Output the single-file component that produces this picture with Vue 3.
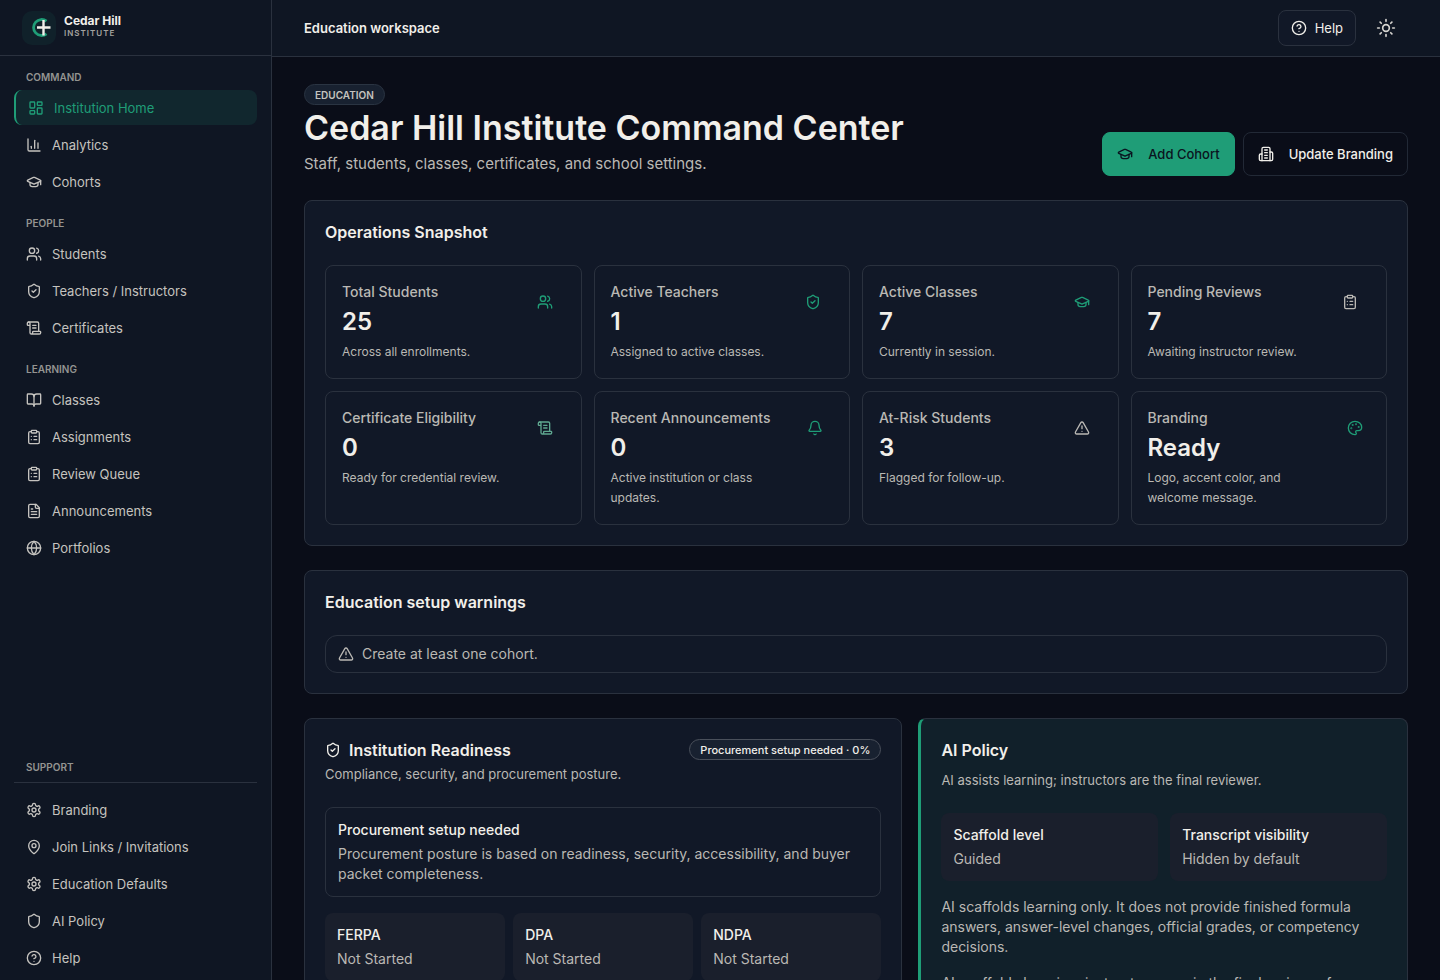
<script setup>
import { h } from 'vue'

const icons = {
  dashboard: '<rect width="7" height="9" x="3" y="3" rx="1"/><rect width="7" height="5" x="14" y="3" rx="1"/><rect width="7" height="9" x="14" y="12" rx="1"/><rect width="7" height="5" x="3" y="16" rx="1"/>',
  chart: '<path d="M3 3v16a2 2 0 0 0 2 2h16"/><path d="M18 17V9"/><path d="M13 17V5"/><path d="M8 17v-3"/>',
  cap: '<path d="M21.42 10.922a1 1 0 0 0-.019-1.838L12.83 5.18a2 2 0 0 0-1.66 0L2.6 9.08a1 1 0 0 0 0 1.832l8.57 3.908a2 2 0 0 0 1.66 0z"/><path d="M22 10v6"/><path d="M6 12.5V16a6 3 0 0 0 12 0v-3.5"/>',
  users: '<path d="M16 21v-2a4 4 0 0 0-4-4H6a4 4 0 0 0-4 4v2"/><circle cx="9" cy="7" r="4"/><path d="M22 21v-2a4 4 0 0 0-3-3.87"/><path d="M16 3.13a4 4 0 0 1 0 7.75"/>',
  shieldCheck: '<path d="M20 13c0 5-3.5 7.5-7.66 8.95a1 1 0 0 1-.67-.01C7.5 20.5 4 18 4 13V6a1 1 0 0 1 1-1c2 0 4.5-1.2 6.24-2.72a1.17 1.17 0 0 1 1.52 0C14.51 3.81 17 5 19 5a1 1 0 0 1 1 1z"/><path d="m9 12 2 2 4-4"/>',
  shield: '<path d="M20 13c0 5-3.5 7.5-7.66 8.95a1 1 0 0 1-.67-.01C7.5 20.5 4 18 4 13V6a1 1 0 0 1 1-1c2 0 4.5-1.2 6.24-2.72a1.17 1.17 0 0 1 1.52 0C14.51 3.81 17 5 19 5a1 1 0 0 1 1 1z"/>',
  scroll: '<path d="M15 12h-5"/><path d="M15 8h-5"/><path d="M19 17V5a2 2 0 0 0-2-2H4"/><path d="M8 21h12a2 2 0 0 0 2-2v-1a1 1 0 0 0-1-1H11a1 1 0 0 0-1 1v1a2 2 0 1 1-4 0V5a2 2 0 1 0-4 0v2a1 1 0 0 0 1 1h3"/>',
  book: '<path d="M12 7v14"/><path d="M3 18a1 1 0 0 1-1-1V4a1 1 0 0 1 1-1h5a4 4 0 0 1 4 4 4 4 0 0 1 4-4h5a1 1 0 0 1 1 1v13a1 1 0 0 1-1 1h-6a3 3 0 0 0-3 3 3 3 0 0 0-3-3z"/>',
  clipboard: '<rect width="8" height="4" x="8" y="2" rx="1" ry="1"/><path d="M16 4h2a2 2 0 0 1 2 2v14a2 2 0 0 1-2 2H6a2 2 0 0 1-2-2V6a2 2 0 0 1 2-2h2"/><path d="M12 11h4"/><path d="M12 16h4"/><path d="M8 11h.01"/><path d="M8 16h.01"/>',
  file: '<path d="M15 2H6a2 2 0 0 0-2 2v16a2 2 0 0 0 2 2h12a2 2 0 0 0 2-2V7Z"/><path d="M14 2v4a2 2 0 0 0 2 2h4"/><path d="M10 9H8"/><path d="M16 13H8"/><path d="M16 17H8"/>',
  globe: '<circle cx="12" cy="12" r="10"/><path d="M12 2a14.5 14.5 0 0 0 0 20 14.5 14.5 0 0 0 0-20"/><path d="M2 12h20"/>',
  settings: '<path d="M12.22 2h-.44a2 2 0 0 0-2 2v.18a2 2 0 0 1-1 1.73l-.43.25a2 2 0 0 1-2 0l-.15-.08a2 2 0 0 0-2.73.73l-.22.38a2 2 0 0 0 .73 2.73l.15.1a2 2 0 0 1 1 1.72v.51a2 2 0 0 1-1 1.74l-.15.09a2 2 0 0 0-.73 2.73l.22.38a2 2 0 0 0 2.73.73l.15-.08a2 2 0 0 1 2 0l.43.25a2 2 0 0 1 1 1.73V20a2 2 0 0 0 2 2h.44a2 2 0 0 0 2-2v-.18a2 2 0 0 1 1-1.73l.43-.25a2 2 0 0 1 2 0l.15.08a2 2 0 0 0 2.73-.73l.22-.39a2 2 0 0 0-.73-2.73l-.15-.08a2 2 0 0 1-1-1.74v-.5a2 2 0 0 1 1-1.74l.15-.09a2 2 0 0 0 .73-2.73l-.22-.38a2 2 0 0 0-2.73-.73l-.15.08a2 2 0 0 1-2 0l-.43-.25a2 2 0 0 1-1-1.73V4a2 2 0 0 0-2-2z"/><circle cx="12" cy="12" r="3"/>',
  pin: '<path d="M20 10c0 4.993-5.539 10.193-7.399 11.799a1 1 0 0 1-1.202 0C9.539 20.193 4 14.993 4 10a8 8 0 0 1 16 0"/><circle cx="12" cy="10" r="3"/>',
  help: '<circle cx="12" cy="12" r="10"/><path d="M9.09 9a3 3 0 0 1 5.83 1c0 2-3 3-3 3"/><path d="M12 17h.01"/>',
  sun: '<circle cx="12" cy="12" r="4"/><path d="M12 2v2"/><path d="M12 20v2"/><path d="m4.93 4.93 1.41 1.41"/><path d="m17.66 17.66 1.41 1.41"/><path d="M2 12h2"/><path d="M20 12h2"/><path d="m6.34 17.66-1.41 1.41"/><path d="m19.07 4.93-1.41 1.41"/>',
  building: '<path d="M6 22V4a2 2 0 0 1 2-2h8a2 2 0 0 1 2 2v18Z"/><path d="M6 12H4a2 2 0 0 0-2 2v6a2 2 0 0 0 2 2h2"/><path d="M18 9h2a2 2 0 0 1 2 2v9a2 2 0 0 1-2 2h-2"/><path d="M10 6h4"/><path d="M10 10h4"/><path d="M10 14h4"/><path d="M10 18h4"/>',
  bell: '<path d="M10.268 21a2 2 0 0 0 3.464 0"/><path d="M3.262 15.326A1 1 0 0 0 4 17h16a1 1 0 0 0 .74-1.673C19.41 13.956 18 12.499 18 8A6 6 0 0 0 6 8c0 4.499-1.411 5.956-2.738 7.326"/>',
  alert: '<path d="m21.73 18-8-14a2 2 0 0 0-3.48 0l-8 14A2 2 0 0 0 4 21h16a2 2 0 0 0 1.73-3"/><path d="M12 9v4"/><path d="M12 17h.01"/>',
  palette: '<path d="M12 22a1 1 0 0 1 0-20 10 9 0 0 1 10 9 5 5 0 0 1-5 5h-2.25a1.75 1.75 0 0 0-1.4 2.8l.3.4a1.75 1.75 0 0 1-1.4 2.8z"/><circle cx="13.5" cy="6.5" r=".5"/><circle cx="17.5" cy="10.5" r=".5"/><circle cx="6.5" cy="12.5" r=".5"/><circle cx="8.5" cy="7.5" r=".5"/>',
}

const Icon = (props) =>
  h('svg', {
    width: props.size || 16,
    height: props.size || 16,
    viewBox: '0 0 24 24',
    fill: 'none',
    stroke: 'currentColor',
    'stroke-width': 2,
    'stroke-linecap': 'round',
    'stroke-linejoin': 'round',
    'aria-hidden': 'true',
    innerHTML: icons[props.name],
  })
Icon.props = ['name', 'size']

const groups = [
  {
    title: 'Command',
    items: [
      { label: 'Institution Home', icon: 'dashboard', active: true },
      { label: 'Analytics', icon: 'chart' },
      { label: 'Cohorts', icon: 'cap' },
    ],
  },
  {
    title: 'People',
    items: [
      { label: 'Students', icon: 'users' },
      { label: 'Teachers / Instructors', icon: 'shieldCheck' },
      { label: 'Certificates', icon: 'scroll' },
    ],
  },
  {
    title: 'Learning',
    items: [
      { label: 'Classes', icon: 'book' },
      { label: 'Assignments', icon: 'clipboard' },
      { label: 'Review Queue', icon: 'clipboard' },
      { label: 'Announcements', icon: 'file' },
      { label: 'Portfolios', icon: 'globe' },
    ],
  },
]

const support = [
  { label: 'Branding', icon: 'settings' },
  { label: 'Join Links / Invitations', icon: 'pin' },
  { label: 'Education Defaults', icon: 'settings' },
  { label: 'AI Policy', icon: 'shield' },
  { label: 'Help', icon: 'help' },
]

const stats = [
  { label: 'Total Students', value: '25', note: 'Across all enrollments.', icon: 'users', tone: 'green' },
  { label: 'Active Teachers', value: '1', note: 'Assigned to active classes.', icon: 'shieldCheck', tone: 'green' },
  { label: 'Active Classes', value: '7', note: 'Currently in session.', icon: 'cap', tone: 'green' },
  { label: 'Pending Reviews', value: '7', note: 'Awaiting instructor review.', icon: 'clipboard', tone: 'plain' },
  { label: 'Certificate Eligibility', value: '0', note: 'Ready for credential review.', icon: 'scroll', tone: 'sage' },
  { label: 'Recent Announcements', value: '0', note: 'Active institution or class updates.', icon: 'bell', tone: 'green' },
  { label: 'At-Risk Students', value: '3', note: 'Flagged for follow-up.', icon: 'alert', tone: 'plain' },
  { label: 'Branding', value: 'Ready', note: 'Logo, accent color, and welcome message.', icon: 'palette', tone: 'green' },
]

const agreements = ['FERPA', 'DPA', 'NDPA']
</script>

<template>
  <div class="shell">
    <aside class="sidebar">
      <div class="brand">
        <span class="brand-mark">
          <svg width="34" height="34" viewBox="0 0 34 34" fill="none" aria-hidden="true">
            <path d="M24.5 10.2A8 8 0 1 0 24.5 22.800" stroke="#1f9d77" stroke-width="2.800" />
            <path d="M21.500 9v15.500M15 16.500h13.500" stroke="#f1efea" stroke-width="2.400" />
          </svg>
        </span>
        <span class="brand-text">
          <strong>Cedar Hill</strong>
          <small>INSTITUTE</small>
        </span>
      </div>

      <nav class="nav" aria-label="Main">
        <section v-for="group in groups" :key="group.title">
          <h2 class="nav-title">{{ group.title }}</h2>
          <ul class="nav-list">
            <li v-for="item in group.items" :key="item.label">
              <a href="#" class="nav-link" :class="{ active: item.active }">
                <Icon :name="item.icon" />{{ item.label }}
              </a>
            </li>
          </ul>
        </section>
        <section class="support">
          <h2 class="nav-title">Support</h2>
          <ul class="nav-list">
            <li v-for="item in support" :key="item.label">
              <a href="#" class="nav-link"><Icon :name="item.icon" />{{ item.label }}</a>
            </li>
          </ul>
        </section>
      </nav>
    </aside>

    <div class="content">
      <header class="topbar">
        <span class="workspace">Education workspace</span>
        <div class="tools">
          <button type="button" class="help"><Icon name="help" />Help</button>
          <button type="button" class="theme" aria-label="Toggle theme"><Icon name="sun" :size="20" /></button>
        </div>
      </header>

      <main class="main">
        <div class="hero">
          <div>
            <span class="badge">EDUCATION</span>
            <h1>Cedar Hill Institute Command Center</h1>
            <p>Staff, students, classes, certificates, and school settings.</p>
          </div>
          <div class="actions">
            <button type="button" class="action primary"><Icon name="cap" />Add Cohort</button>
            <button type="button" class="action"><Icon name="building" />Update Branding</button>
          </div>
        </div>

        <section class="panel">
          <h2 class="panel-title">Operations Snapshot</h2>
          <div class="stats">
            <article v-for="stat in stats" :key="stat.label" class="stat">
              <div class="stat-text">
                <h3>{{ stat.label }}</h3>
                <strong>{{ stat.value }}</strong>
                <p>{{ stat.note }}</p>
              </div>
              <span class="stat-icon" :class="stat.tone"><Icon :name="stat.icon" /></span>
            </article>
          </div>
        </section>

        <section class="panel">
          <h2 class="panel-title">Education setup warnings</h2>
          <p class="warning"><Icon name="alert" />Create at least one cohort.</p>
        </section>

        <div class="columns">
          <section class="panel">
            <div class="readiness-head">
              <div>
                <h2 class="title"><Icon name="shieldCheck" />Institution Readiness</h2>
                <p class="sub">Compliance, security, and procurement posture.</p>
              </div>
              <span class="badge status">Procurement setup needed · 0%</span>
            </div>
            <div class="notice">
              <h3>Procurement setup needed</h3>
              <p>Procurement posture is based on readiness, security, accessibility, and buyer packet completeness.</p>
            </div>
            <div class="tiles three">
              <div v-for="name in agreements" :key="name" class="tile">
                <h3>{{ name }}</h3>
                <p>Not Started</p>
              </div>
            </div>
          </section>

          <section class="panel policy">
            <h2 class="title">AI Policy</h2>
            <p class="sub">AI assists learning; instructors are the final reviewer.</p>
            <div class="tiles two">
              <div class="tile">
                <h3>Scaffold level</h3>
                <p>Guided</p>
              </div>
              <div class="tile">
                <h3>Transcript visibility</h3>
                <p>Hidden by default</p>
              </div>
            </div>
            <p class="copy">
              AI scaffolds learning only. It does not provide finished formula answers, answer-level changes,
              official grades, or competency decisions.
            </p>
            <p class="copy">AI scaffolds learning; instructors remain the final reviewer for competency decisions.</p>
          </section>
        </div>
      </main>
    </div>
  </div>
</template>

<style>
body {
  background: #0a0d18;
}
</style>

<style scoped>
.shell {
  display: flex;
  height: 100vh;
  overflow: hidden;
  background: #0a0d18;
  color: #f1efea;
  font-family: Inter, "Liberation Sans", sans-serif;
  font-size: 14px;
  line-height: 20px;
}
.shell * {
  box-sizing: border-box;
}
h1, h2, h3, p, ul {
  margin: 0;
  padding: 0;
  font-weight: inherit;
  font-size: inherit;
}
button {
  font: inherit;
  color: inherit;
  background: none;
  border: 0;
  cursor: pointer;
}
svg {
  flex: none;
}

.sidebar {
  flex: none;
  display: flex;
  flex-direction: column;
  width: 272px;
  background: #0f1623;
  border-right: 1px solid #2a313e;
}
.brand {
  display: flex;
  align-items: center;
  gap: 8px;
  height: 56px;
  padding: 0 22px;
  border-bottom: 1px solid #2a313e;
}
.brand-mark {
  display: flex;
  border-radius: 10px;
  background: #10212a;
}
.brand-text {
  display: flex;
  flex-direction: column;
  padding-bottom: 3px;
}
.brand-text strong {
  font-size: 12px;
  line-height: 14px;
  font-weight: 700;
}
.brand-text small {
  font-size: 8px;
  line-height: 10px;
  font-weight: 600;
  letter-spacing: 1px;
  color: #a3a29f;
}
.nav {
  flex: 1;
  display: flex;
  flex-direction: column;
  gap: 16px;
  padding: 13px 14px 5px;
}
.nav-title {
  padding: 0 12px;
  margin-bottom: 5px;
  font-size: 10px;
  line-height: 16px;
  font-weight: 600;
  text-transform: uppercase;
  color: #949491;
}
.nav-list {
  display: flex;
  flex-direction: column;
  gap: 2px;
  list-style: none;
}
.nav-link {
  display: flex;
  align-items: center;
  gap: 10px;
  height: 35px;
  padding: 0 12px;
  border-radius: 8px;
  font-size: 13px;
  color: #c5c3bf;
  text-decoration: none;
}
.nav-link.active {
  border-left: 2px solid #1f9d77;
  background: #11272e;
  color: #1f9d77;
}
.support {
  margin-top: auto;
}
.support .nav-title {
  margin-bottom: 9px;
  padding-bottom: 7px;
  border-bottom: 1px solid #2a313e;
}

.content {
  flex: 1;
  min-width: 0;
  display: flex;
  flex-direction: column;
}
.topbar {
  flex: none;
  display: flex;
  align-items: center;
  justify-content: space-between;
  height: 57px;
  padding: 0 32px;
  background: #0f1623;
  border-bottom: 1px solid #2a313e;
}
.workspace {
  font-size: 13px;
  font-weight: 600;
}
.tools {
  display: flex;
  align-items: center;
  gap: 8px;
}
.help {
  display: flex;
  align-items: center;
  gap: 8px;
  height: 36px;
  padding: 0 12px;
  border: 1px solid #2a313e;
  border-radius: 8px;
  background: #111827;
  font-size: 13px;
}
.theme {
  display: grid;
  place-items: center;
  width: 44px;
  height: 44px;
  padding: 0;
  color: #d6d4d0;
}
.main {
  flex: 1;
  min-height: 0;
  overflow-y: auto;
  scrollbar-width: none;
  display: flex;
  flex-direction: column;
  gap: 24px;
  padding: 27px 32px 32px;
}
.main > * {
  flex: none;
}
.hero {
  display: flex;
  align-items: flex-end;
  justify-content: space-between;
  gap: 16px;
}
.badge {
  display: inline-flex;
  align-items: center;
  height: 21px;
  padding: 0 10px;
  border: 1px solid #2a3442;
  border-radius: 11px;
  background: #182130;
  font-size: 10px;
  font-weight: 600;
  line-height: 16px;
  color: #c5c3bf;
  white-space: nowrap;
  vertical-align: top;
}
.hero h1 {
  font-size: 34px;
  line-height: 46px;
  font-weight: 600;
}
.hero p {
  font-size: 15px;
  line-height: 25px;
  color: #bab8b4;
}
.actions {
  display: flex;
  gap: 8px;
}
.action {
  display: flex;
  align-items: center;
  gap: 15px;
  height: 44px;
  padding: 0 14px;
  border: 1px solid #222936;
  border-radius: 8px;
  font-size: 13px;
  font-weight: 500;
  white-space: nowrap;
}
.action.primary {
  border-color: #1f9d77;
  background: #1f9d77;
  color: #0a1420;
}

.panel {
  padding: 20px;
  border: 1px solid #2a313e;
  border-radius: 8px;
  background: #111827;
}
.panel-title,
.title {
  font-size: 16px;
  line-height: 22px;
  font-weight: 600;
}
.panel-title {
  margin-bottom: 22px;
}
.stats {
  display: grid;
  grid-template-columns: repeat(4, minmax(0, 1fr));
  gap: 12px;
}
.stat {
  display: flex;
  align-items: flex-start;
  justify-content: space-between;
  gap: 12px;
  padding: 16px;
  border: 1px solid #2a313e;
  border-radius: 8px;
}
.stat-text {
  min-width: 0;
}
.stat h3 {
  font-weight: 500;
  color: #bab8b4;
}
.stat strong {
  display: block;
  margin: 4px 0;
  font-size: 24px;
  line-height: 32px;
  font-weight: 600;
}
.stat p {
  font-size: 12px;
  color: #bab8b4;
}
.stat-icon {
  display: grid;
  place-items: center;
  width: 40px;
  height: 40px;
}
.green {
  color: #1f9d77;
}
.sage {
  color: #5fa790;
}
.plain {
  color: #bab8b4;
}
.warning {
  display: flex;
  align-items: center;
  gap: 8px;
  padding: 8px 12px;
  border: 1px solid #2a313e;
  border-radius: 12px;
  color: #bab8b4;
}
.columns {
  display: grid;
  grid-template-columns: minmax(0, 11fr) minmax(0, 9fr);
  gap: 16px;
}
.readiness-head {
  display: flex;
  align-items: flex-start;
  justify-content: space-between;
  gap: 12px;
  margin-bottom: 23px;
}
.title {
  display: flex;
  align-items: center;
  gap: 8px;
}
.sub {
  margin-top: 3px;
  font-size: 13px;
  color: #bab8b4;
}
.badge.status {
  border-color: #4a505b;
  font-size: 11px;
  font-weight: 500;
  color: #f1efea;
}
.notice {
  padding: 12px;
  border: 1px solid #2a313e;
  border-radius: 8px;
}
.notice h3,
.tile h3 {
  font-weight: 500;
}
.notice p,
.tile p {
  margin-top: 4px;
  color: #bab8b4;
}
.tiles {
  display: grid;
  margin-top: 16px;
}
.tiles.three {
  grid-template-columns: repeat(3, minmax(0, 1fr));
  gap: 8px;
}
.tiles.two {
  grid-template-columns: repeat(2, minmax(0, 1fr));
  gap: 12px;
}
.tile {
  padding: 12px;
  border-radius: 8px;
  background: #1a1f2c;
}
.policy {
  border-left: 3px solid #1f9d77;
  background: #11202a;
}
.policy .sub {
  margin-top: 9px;
}
.policy .tiles {
  margin-top: 23px;
}
.copy {
  margin-top: 16px;
  color: #bab8b4;
}
</style>
